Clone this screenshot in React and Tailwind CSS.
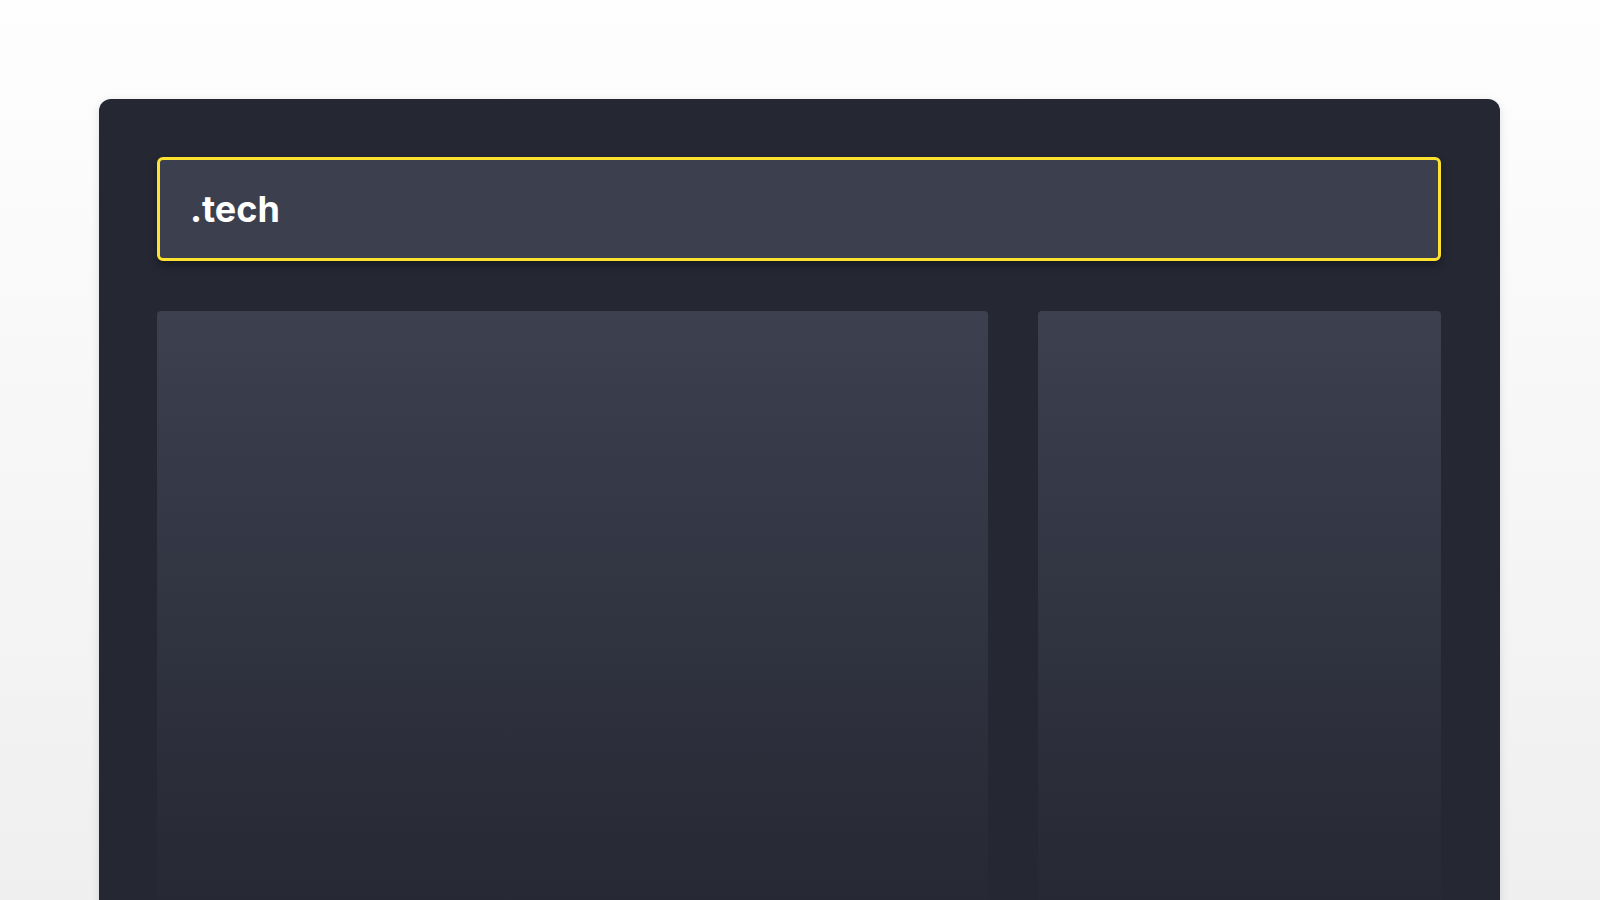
export default function App() {
  return (
    <div className="w-full h-[900px] overflow-hidden bg-gradient-to-b from-[#fefefe] to-[#efefef] pt-[99px]">
      <div className="ml-[99px] w-[1401px] h-[900px] rounded-[12px] bg-[#252733] pl-[58px] pr-[59px] pt-[58px] shadow-[0_2px_8px_rgba(0,0,0,0.12)]">
        <div className="h-[104px] rounded-[6px] border-[3px] border-[#fde22f] bg-[#3b3f4e] flex items-center pl-[30px] shadow-[0_4px_8px_rgba(0,0,0,0.35)]">
          <span className="text-white font-bold text-[36px]" style={{ fontFamily: 'Inter, "Liberation Sans", sans-serif' }}>.tech</span>
        </div>
        <div className="mt-[50px] grid grid-cols-[831px_1fr] gap-[50px]">
          <div className="h-[600px] rounded-[4px] bg-gradient-to-b from-[#3c404f] to-[#262833]" />
          <div className="h-[600px] rounded-[4px] bg-gradient-to-b from-[#3c404f] to-[#262833]" />
        </div>
      </div>
    </div>
  );
}
